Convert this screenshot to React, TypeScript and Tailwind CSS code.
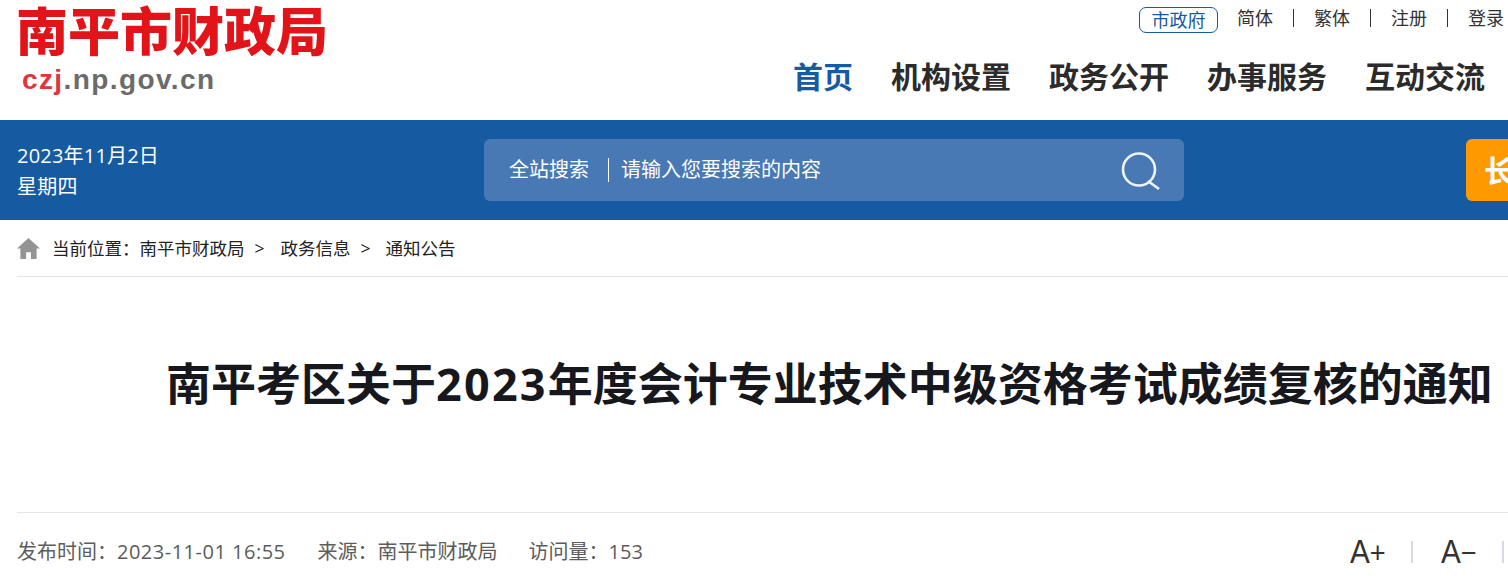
const fontStack = "font-['Open_Sans','Noto_Sans_CJK_SC',sans-serif]";

const topLinks = ["简体", "繁体", "注册", "登录"];
const navItems = ["机构设置", "政务公开", "办事服务", "互动交流"];

function Header() {
    return (
        <header className="h-[120px] flex justify-between pl-[16px]">
            {/* Logo */}
            <div>
                <div className="mt-[2px] text-[52px] leading-[54px] font-black text-[#e2141a] font-['Noto_Sans_CJK_SC',serif] whitespace-nowrap">
                    南平市财政局
                </div>
                <div className="mt-[7px] ml-[6px] text-[28px] leading-[34px] font-bold tracking-[1.4px] font-['Liberation_Sans',sans-serif]">
                    <span className="text-[#e2343a]">czj</span>
                    <span className="text-[#6b6b6b]">.np.gov.cn</span>
                </div>
            </div>

            <div className="flex flex-col items-end">
                {/* Top links */}
                <div className="flex items-center h-[36px] text-[18px] text-[#333] whitespace-nowrap">
                    <span className="w-[79px] h-[26px] mr-[19px] mt-[4px] flex items-center justify-center border border-[#165aa1] rounded-[7px] text-[#165aa1]">
                        市政府
                    </span>
                    {topLinks.map((link, i) => (
                        <span key={link} className="flex items-center">
                            <span>{link}</span>
                            {i < topLinks.length - 1 && (
                                <span className="w-[1px] h-[18px] bg-[#333] mx-[20px]"></span>
                            )}
                        </span>
                    ))}
                    <span className="w-[4px]"></span>
                </div>
                {/* Main nav */}
                <nav className="flex gap-[38px] pr-[23px] mt-[17px] text-[30px] leading-[48px] font-bold text-[#2b2b2b] whitespace-nowrap">
                    <span className="text-[#165aa1]">首页</span>
                    {navItems.map((item) => (
                        <span key={item}>{item}</span>
                    ))}
                </nav>
            </div>
        </header>
    );
}

function SearchBand() {
    return (
        <section className="h-[100px] bg-[#165aa1] flex items-center text-white">
            <div className="w-[484px] pl-[17px] pt-[2px] text-[20px] leading-[31px] tracking-[.2px] shrink-0">
                <p>2023年11月2日</p>
                <p>星期四</p>
            </div>
            <div className="w-[700px] h-[62px] shrink-0 rounded-[6px] bg-[#4879b4] flex items-center pl-[25px] pr-[24px]">
                <span className="text-[20px] pr-[19px] border-r border-white leading-[24px]">全站搜索</span>
                <span className="text-[20px] pl-[12px] flex-1">请输入您要搜索的内容</span>
                <svg viewBox="0 0 40 40" className="w-[40px] h-[40px] fill-none stroke-[#eef3f9]" strokeWidth={2.6}>
                    <circle cx="19" cy="19.5" r="16" />
                    <path d="M28 31 39 39" />
                </svg>
            </div>
            <div className="w-[200px] h-[62px] ml-[282px] shrink-0 rounded-[6px] bg-[#ff9900] pl-[18px] flex items-center text-[30px] font-bold">
                长
            </div>
        </section>
    );
}

function Breadcrumb() {
    return (
        <div className="ml-[17px] h-[57px] border-b border-[#e5e5e5] flex items-center text-[17.5px] text-[#222] whitespace-nowrap">
            <svg viewBox="0 0 24 22" className="w-[23px] h-[21px] mr-[12px] fill-[#949494]">
                <path d="M12 0 0 11h3.5v11h6v-7h5v7h6V11H24z" />
            </svg>
            <span>当前位置：</span>
            <span>南平市财政局</span>
            <span className="ml-[10px]">&gt;</span>
            <span className="ml-[16px]">政务信息</span>
            <span className="ml-[10px]">&gt;</span>
            <span className="ml-[15px]">通知公告</span>
        </div>
    );
}

export default function App() {
    return (
        <div className={`h-[588px] w-[1508px] overflow-hidden bg-white ${fontStack}`}>
            <Header />
            <SearchBand />
            <Breadcrumb />

            {/* Article head */}
            <main className="ml-[17px]">
                <div className="h-[236px] border-b border-[#e5e5e5] pt-[77px] pl-[149px]">
                    <h1 className="text-[45px] leading-[60px] font-bold text-[#16181d] whitespace-nowrap">
                        南平考区关于<span className="tracking-[2.2px]">2023</span>年度会计专业技术中级资格考试成绩复核的通知
                    </h1>
                </div>
                <div className="flex items-center justify-between h-[78px] text-[20px] text-[#5c5c5c] whitespace-nowrap">
                    <div className="flex">
                        <span>发布时间：<span className="tracking-[.5px]">2023-11-01 16:55</span></span>
                        <span className="ml-[32px]">来源：南平市财政局</span>
                        <span className="ml-[31px]">访问量：153</span>
                    </div>
                    <div className="flex items-center text-[#333] font-['Liberation_Sans',sans-serif]">
                        <span className="text-[33px] leading-[40px] scale-x-90 origin-left w-[61px]">
                            A<span className="text-[30px]">+</span>
                        </span>
                        <span className="w-[2px] h-[22px] bg-[#d5dae2] mr-[28px]"></span>
                        <span className="text-[33px] leading-[40px] scale-x-90 origin-left w-[61px]">
                            A<span className="text-[30px]">−</span>
                        </span>
                        <span className="w-[2px] h-[22px] bg-[#d5dae2] mr-[4px]"></span>
                    </div>
                </div>
            </main>
        </div>
    );
}
